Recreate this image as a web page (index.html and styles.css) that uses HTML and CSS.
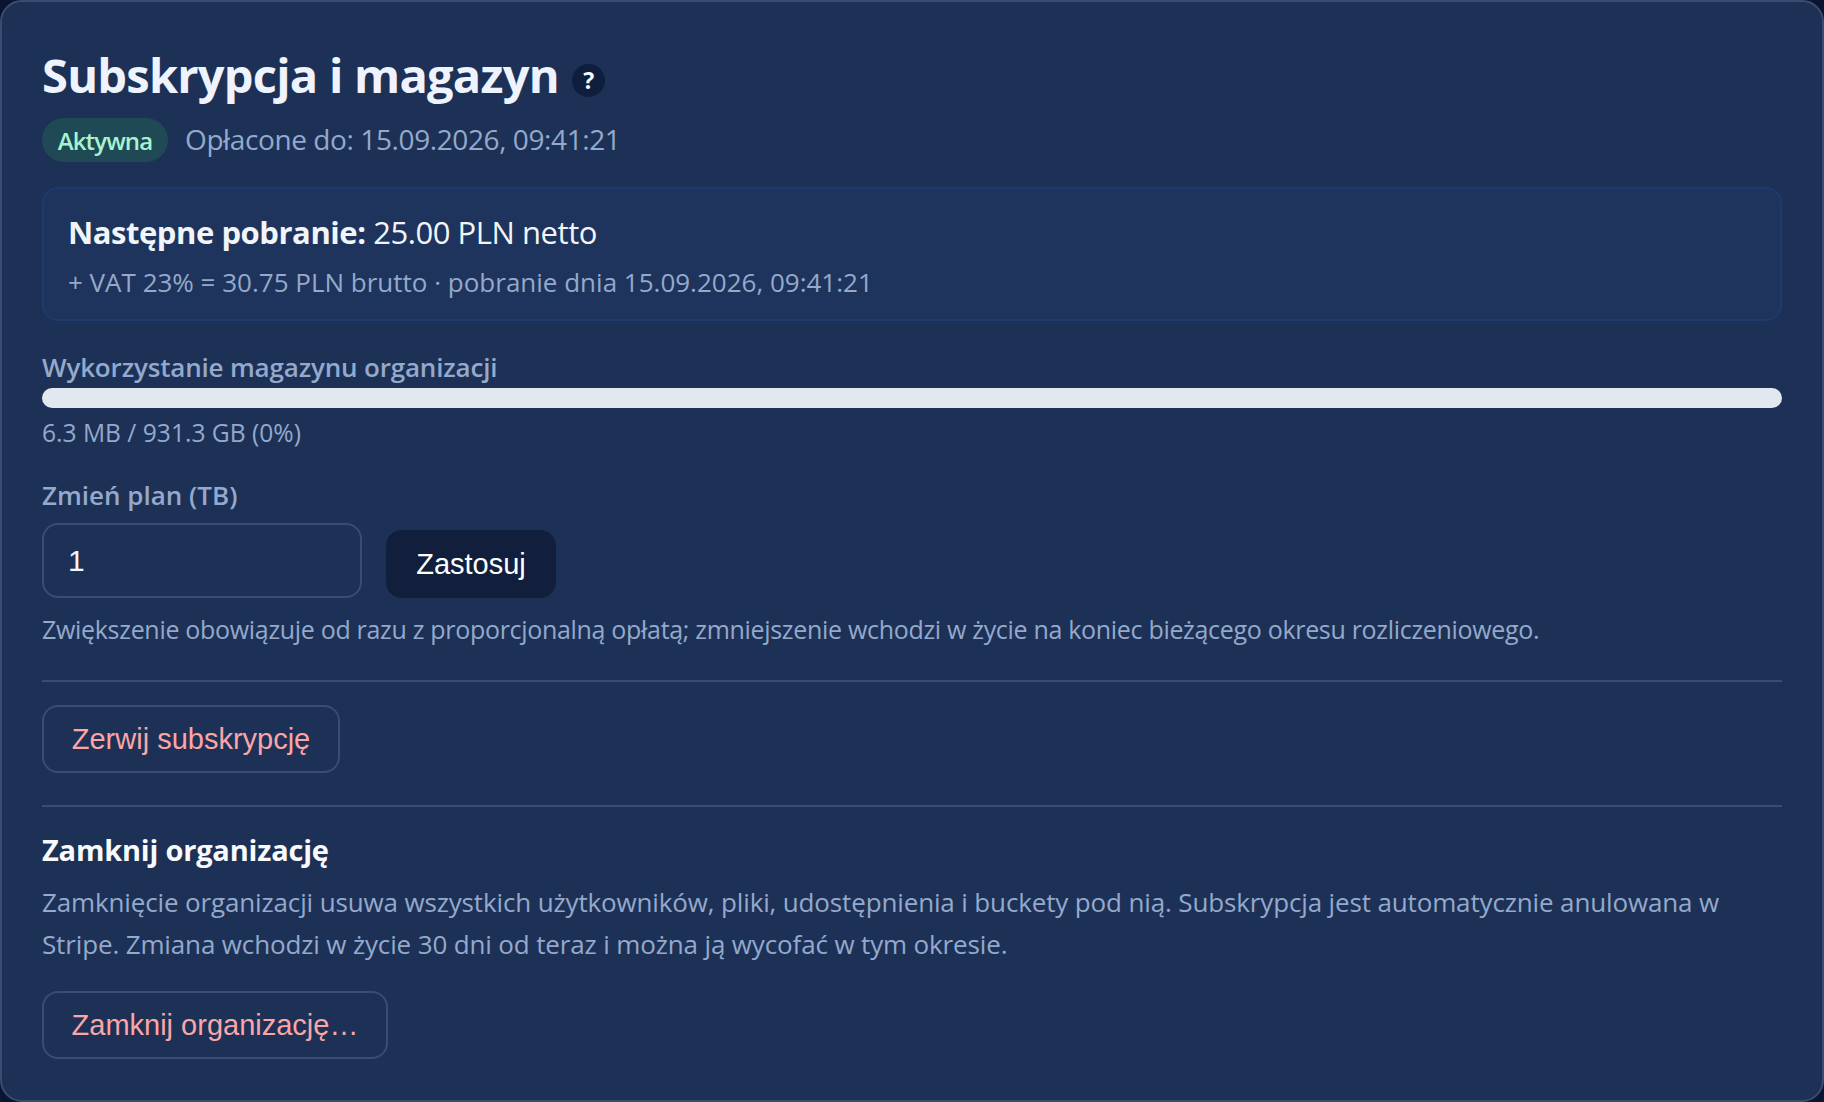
FILE: index.html
```html
<!DOCTYPE html>
<html lang="pl">
<head>
<meta charset="utf-8">
<title>Subskrypcja i magazyn</title>
<link rel="stylesheet" href="styles.css">
</head>
<body>
<section class="card">
  <h1 class="title">Subskrypcja i magazyn <span class="help">?</span></h1>
  <div class="status">
    <span class="pill">Aktywna</span>
    <span class="paid">Opłacone do: 15.09.2026, 09:41:21</span>
  </div>
  <div class="next">
    <div class="next-main"><strong>Następne pobranie:</strong> 25.00 PLN netto</div>
    <div class="next-sub">+ VAT 23% = 30.75 PLN brutto · pobranie dnia 15.09.2026, 09:41:21</div>
  </div>
  <div class="label usage-label">Wykorzystanie magazynu organizacji</div>
  <div class="bar"></div>
  <div class="usage">6.3 MB / 931.3 GB (0%)</div>
  <div class="label plan-label">Zmień plan (TB)</div>
  <div class="plan-row">
    <input class="plan-input" type="text" value="1">
    <button class="btn btn-dark" type="button">Zastosuj</button>
  </div>
  <p class="hint">Zwiększenie obowiązuje od razu z proporcjonalną opłatą; zmniejszenie wchodzi w życie na koniec bieżącego okresu rozliczeniowego.</p>
  <hr class="rule rule-a">
  <button class="btn btn-danger btn-cancel" type="button">Zerwij subskrypcję</button>
  <hr class="rule rule-b">
  <h3 class="close-title">Zamknij organizację</h3>
  <p class="close-text">Zamknięcie organizacji usuwa wszystkich użytkowników, pliki, udostępnienia i buckety pod nią. Subskrypcja jest automatycznie anulowana w Stripe. Zmiana wchodzi w życie 30 dni od teraz i można ją wycofać w tym okresie.</p>
  <button class="btn btn-danger btn-close" type="button">Zamknij organizację…</button>
</section>
</body>
</html>
```
FILE: styles.css
```css
* { box-sizing: border-box; }
html, body { margin: 0; height: 100%; }
body {
  background: #0b1530;
  font-family: "Open Sans", "Noto Sans", sans-serif;
  font-stretch: 90%;
  color: #f1f5f9;
  overflow: hidden;
}
.card {
  height: 1102px;
  padding: 40px 40px 0;
  background: #1d3157;
  border: 2px solid #3a4c6f;
  border-radius: 22px;
}
.title {
  margin: 0 0 10px;
  font-size: 47px;
  line-height: 66px;
  letter-spacing: -0.75px;
  font-weight: 700;
  color: #eef3fd;
  display: flex;
  align-items: center;
  white-space: pre;
}
.help {
  width: 33px;
  height: 33px;
  margin-left: 2px;
  margin-top: 10px;
  border-radius: 50%;
  background: #0f1e3c;
  color: #f8fafc;
  font-size: 23px;
  font-weight: 700;
  letter-spacing: 0;
  line-height: 33px;
  text-align: center;
}
.status { display: flex; align-items: center; gap: 17px; height: 44px; margin-bottom: 25px; }
.pill {
  height: 44px;
  width: 126px;
  border-radius: 22px;
  background: #1f4a55;
  color: #a7f3d0;
  font-size: 24px;
  font-weight: 600;
  letter-spacing: -0.9px;
  line-height: 46px;
  text-align: center;
}
.paid { font-size: 28px; letter-spacing: -0.4px; margin-bottom: 2px; color: #94a9cb; }
.next {
  height: 134px;
  padding: 21px 24px 0;
  background: #1e345c;
  border: 2px solid #1f3b6d;
  border-radius: 16px;
  margin-bottom: 29px;
}
.next-main { font-size: 31px; letter-spacing: -0.45px; line-height: 44px; color: #f1f5f9; }
.next-main strong { font-weight: 700; }
.next-sub { font-size: 26px; line-height: 36px; margin-top: 10px; color: #94a9cb; }
.label { font-size: 26px; font-weight: 600; line-height: 36px; color: #94a9cb; }
.usage-label { letter-spacing: -0.17px; margin-top: -1px; margin-bottom: 3px; }
.bar { height: 20px; border-radius: 10px; background: #e2e8f0; }
.usage { font-size: 24.6px; line-height: 34px; margin-top: 8px; color: #94a9cb; }
.plan-label { margin-top: 27px; }
.plan-row { display: flex; align-items: flex-end; gap: 24px; margin-top: 10px; margin-bottom: 2px; }
.plan-input {
  width: 320px;
  height: 75px;
  padding: 0 24px;
  background: transparent;
  border: 2px solid #3a4c6f;
  border-radius: 16px;
  color: #f1f5f9;
  font: 30px "Liberation Sans", Arial, sans-serif;
  outline: none;
}
.btn {
  height: 68px;
  padding: 0 30px;
  border-radius: 16px;
  font: 29px "Liberation Sans", Arial, sans-serif;
  display: block;
}
.btn-dark { width: 170px; border: 0; padding: 0; background: #111f3d; color: #fff; }
.btn-danger { background: transparent; border: 2px solid #3a4c6f; color: #fca5a5; }
.btn-cancel { width: 298px; padding: 0; }
.btn-close { width: 346px; padding: 0; margin-top: 26px; }
.hint { margin: 13px 0 0; font-size: 25px; letter-spacing: -0.31px; line-height: 36px; color: #94a9cb; white-space: nowrap; }
.rule { height: 2px; border: 0; margin: 0; background: #3a4c6f; }
.rule-a { margin-top: 33px; margin-bottom: 23px; }
.rule-b { margin-top: 32px; }
.close-title { margin: 23px 0 0; font-size: 29px; letter-spacing: -0.2px; line-height: 40px; font-weight: 700; color: #f8fafc; }
.close-text { margin: 12px 0 0; font-size: 26px; letter-spacing: -0.14px; line-height: 41.5px; color: #94a9cb; }
```
